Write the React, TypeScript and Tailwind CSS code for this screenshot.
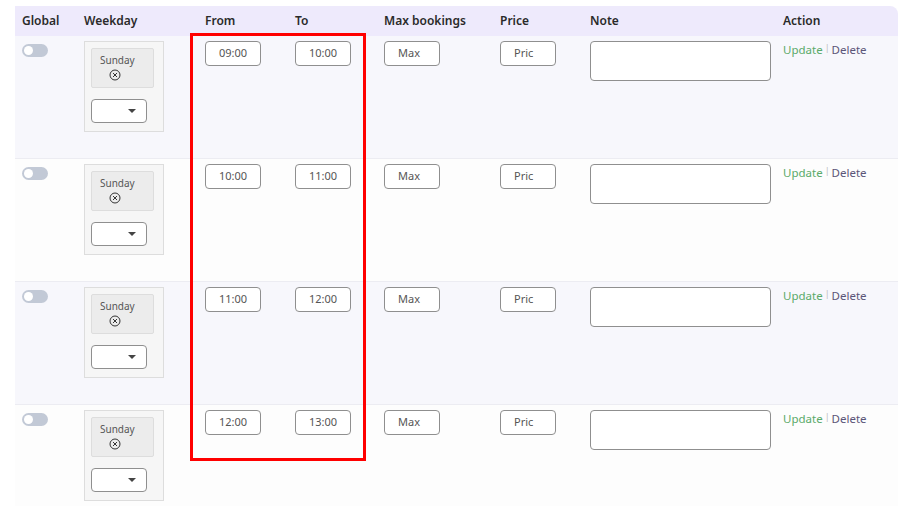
const ROWS = [
  { from: '09:00', to: '10:00', bg: 'bg-[#f7f7fc]' },
  { from: '10:00', to: '11:00', bg: 'bg-[#fdfdfd]' },
  { from: '11:00', to: '12:00', bg: 'bg-[#f7f7fc]' },
  { from: '12:00', to: '13:00', bg: 'bg-[#fdfdfd]' },
]

const input = 'h-[25px] w-[56px] rounded-[4px] border border-[#8f8f8f] bg-white flex items-center text-[11px] text-[#555]'

function RemoveIcon() {
  return (
    <svg width="12" height="12" viewBox="0 0 12 12" fill="none" stroke="#333" strokeWidth="1">
      <circle cx="6" cy="6" r="5" />
      <path d="M4 4l4 4M8 4l-4 4" />
    </svg>
  )
}

export default function App() {
  return (
    <div className="relative w-[900px] h-[506px] overflow-hidden bg-white font-['Inter',sans-serif] text-[#222]">
      <div className="ml-[15px] mr-[2px] mt-[6px]">
        <div className="flex h-[30px] items-center rounded-tr-[8px] bg-[#eeeafc] text-[12px] font-semibold text-[#2a2a2a]">
          <div className="w-[69px] pl-[7px]">Global</div>
          <div className="w-[121px]">Weekday</div>
          <div className="w-[90px]">From</div>
          <div className="w-[89px]">To</div>
          <div className="w-[116px]">Max bookings</div>
          <div className="w-[90px]">Price</div>
          <div className="w-[193px]">Note</div>
          <div>Action</div>
        </div>
        {ROWS.map((r) => (
          <div key={r.from} className={`flex h-[123px] border-b border-[#ececf2] pt-[5px] ${r.bg}`}>
            <div className="w-[69px] pl-[7px] pt-[3px]">
              <div className="relative h-[13px] w-[26px] rounded-full bg-[#c2c9d6]">
                <div className="absolute left-[2px] top-[2px] h-[9px] w-[9px] rounded-full bg-white" />
              </div>
            </div>
            <div className="w-[121px]">
              <div className="h-[91px] w-[80px] border border-[#ddd] bg-[#f6f6f6] p-[6px]">
                <div className="h-[40px] w-[63px] rounded-[2px] border border-[#ddd] bg-[#ececec] pl-[8px] pt-[6px] text-[10px] leading-none text-[#555]">
                  <div>Sunday</div>
                  <div className="ml-[9px] mt-[4px]"><RemoveIcon /></div>
                </div>
                <div className="mt-[11px] flex h-[24px] w-[56px] items-center justify-end rounded-[4px] border border-[#8f8f8f] bg-white pr-[10px]">
                  <div className="h-0 w-0 border-x-[4px] border-t-[4px] border-x-transparent border-t-[#444]" />
                </div>
              </div>
            </div>
            <div className="w-[90px]"><div className={`${input} justify-center`}>{r.from}</div></div>
            <div className="w-[89px]"><div className={`${input} justify-center`}>{r.to}</div></div>
            <div className="w-[116px]"><div className={`${input} pl-[13px]`}>Max</div></div>
            <div className="w-[90px]"><div className={`${input} pl-[13px]`}>Pric</div></div>
            <div className="w-[193px]">
              <div className="h-[40px] w-[181px] rounded-[4px] border border-[#8f8f8f] bg-white" />
            </div>
            <div className="flex text-[11.5px] leading-[18px]">
              <span className="text-[#5aaa6a]">Update</span>
              <span className="mx-[2px] mt-[-2px] text-[9px] text-[#bbb]">|</span>
              <span className="text-[#5b5578]">Delete</span>
            </div>
          </div>
        ))}
      </div>
      <div className="absolute left-[190px] top-[33px] h-[428px] w-[176px] border-[3px] border-[#f00]" />
    </div>
  )
}
